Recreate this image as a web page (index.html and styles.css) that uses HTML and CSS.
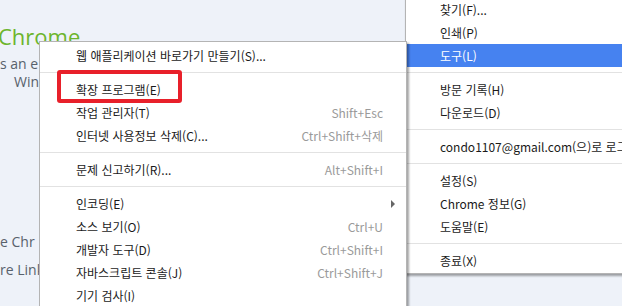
FILE: index.html
```html
<!DOCTYPE html>
<html lang="ko">
<head>
    <meta charset="UTF-8">
    <title>Chrome 도구 메뉴</title>
    <link rel="stylesheet" href="styles.css">
</head>
<body>
    <div class="page">
        <h1 class="page-title">Chrome</h1>
        <p class="page-text">s an e</p>
        <p class="page-text indent">Wind</p>
        <p class="page-text lower">e Chr</p>
        <p class="page-text">re Link</p>
    </div>

    <div class="menu main-menu">
        <div class="menu-item">찾기(F)...</div>
        <div class="menu-item">인쇄(P)</div>
        <div class="menu-item active">도구(L)</div>
        <div class="menu-sep"></div>
        <div class="menu-item">방문 기록(H)</div>
        <div class="menu-item">다운로드(D)</div>
        <div class="menu-sep"></div>
        <div class="menu-item">condo1107@gmail.com(으)로 로그인됨</div>
        <div class="menu-sep"></div>
        <div class="menu-item">설정(S)</div>
        <div class="menu-item">Chrome 정보(G)</div>
        <div class="menu-item">도움말(E)</div>
        <div class="menu-sep"></div>
        <div class="menu-item">종료(X)</div>
    </div>

    <div class="menu sub-menu">
        <div class="menu-item">웹 애플리케이션 바로가기 만들기(S)...</div>
        <div class="menu-sep"></div>
        <div class="menu-item">확장 프로그램(E)</div>
        <div class="menu-item"><span>작업 관리자(T)</span><span class="shortcut">Shift+Esc</span></div>
        <div class="menu-item"><span>인터넷 사용정보 삭제(C)...</span><span class="shortcut">Ctrl+Shift+삭제</span></div>
        <div class="menu-sep"></div>
        <div class="menu-item"><span>문제 신고하기(R)...</span><span class="shortcut">Alt+Shift+I</span></div>
        <div class="menu-sep"></div>
        <div class="menu-item"><span>인코딩(E)</span><span class="arrow"></span></div>
        <div class="menu-item"><span>소스 보기(O)</span><span class="shortcut">Ctrl+U</span></div>
        <div class="menu-item"><span>개발자 도구(D)</span><span class="shortcut">Ctrl+Shift+I</span></div>
        <div class="menu-item"><span>자바스크립트 콘솔(J)</span><span class="shortcut">Ctrl+Shift+J</span></div>
        <div class="menu-item">기기 검사(I)</div>
    </div>

    <div class="highlight-box"></div>
</body>
</html>
```

FILE: styles.css
```css
body {
    margin: 0;
    background: #eef2f9;
    width: 622px;
    height: 306px;
    overflow: hidden;
    position: relative;
    font-family: 'Noto Sans CJK KR', 'Noto Sans', sans-serif;
}

.page {
    padding-top: 22px;
    color: #58616c;
    font-family: 'Open Sans', 'Liberation Sans', sans-serif;
    white-space: nowrap;
}

.page-title {
    margin: 0 0 0 -2px;
    font-size: 22px;
    font-weight: 400;
    line-height: 28px;
    color: #6cb52d;
}

.page-text {
    margin: 0;
    width: 39px;
    overflow: hidden;
    font-size: 14px;
    line-height: 18px;
}

.page-text:nth-of-type(1) {
    margin-top: 5px;
}

.indent {
    padding-left: 14px;
    width: 25px;
}

.lower {
    margin-top: 142px !important;
    margin-bottom: 10px !important;
}

.menu {
    position: absolute;
    background: #fff;
    border: 1px solid #b4b4b4;
    box-sizing: border-box;
    color: #1a1a1a;
    font-size: 12px;
}

.main-menu {
    left: 405px;
    top: -5px;
    width: 240px;
    height: 279px;
    padding-top: 2px;
    box-shadow: 1px 2px 2px rgba(0,0,0,0.35);
    z-index: 1;
}

.main-menu .menu-item {
    padding-left: 34px;
}

.sub-menu {
    left: 39px;
    top: 41px;
    width: 368px;
    height: 280px;
    padding-top: 2px;
    box-shadow: 2px 2px 2px rgba(0,0,0,0.35);
    z-index: 2;
}

.sub-menu .menu-item {
    padding-left: 36px;
    padding-right: 23px;
}

.menu-item {
    height: 23px;
    line-height: 23px;
    display: flex;
    justify-content: space-between;
    align-items: center;
    white-space: nowrap;
}

.menu-item.active {
    background: #4682f0;
    color: #fff;
}

.shortcut {
    color: #9a9a9a;
}

.arrow {
    width: 0;
    height: 0;
    margin-right: -12px;
    border-top: 4px solid transparent;
    border-bottom: 4px solid transparent;
    border-left: 4px solid #666;
}

.menu-sep {
    height: 1px;
    margin: 5px 0;
    background: #e2e2e2;
}

.highlight-box {
    position: absolute;
    left: 57px;
    top: 70px;
    width: 125px;
    height: 33px;
    box-sizing: border-box;
    border: 4px solid #e8202a;
    border-radius: 3px;
    z-index: 3;
}
```
